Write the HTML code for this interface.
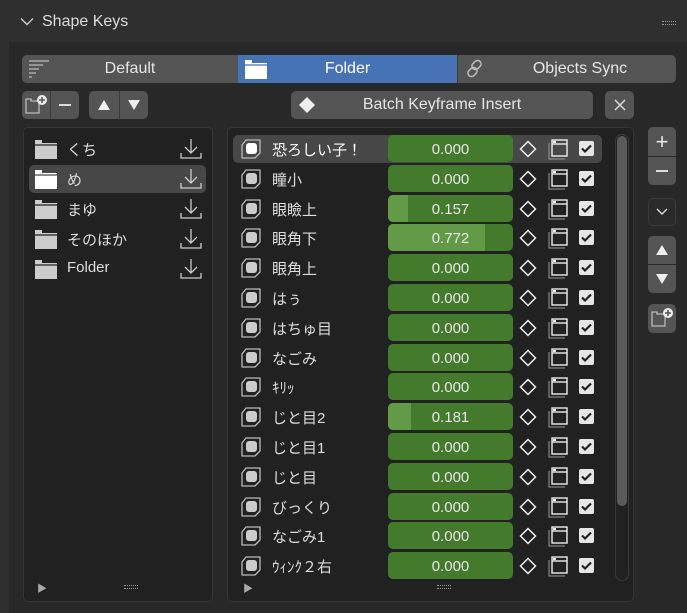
<!DOCTYPE html>
<html><head><meta charset="utf-8"><style>
*{box-sizing:border-box;margin:0;padding:0}
body{width:687px;height:613px;background:#2f2f2f;font-family:"Liberation Sans","Noto Sans CJK JP",sans-serif;color:#e0e0e0;font-size:15px;position:relative;overflow:hidden}
.a{position:absolute}
.btn{position:absolute;background:#545454;border-radius:5px;display:flex;align-items:center;justify-content:center;color:#e6e6e6;font-size:16px}
.row{position:absolute;left:233px;width:369px;height:28px}
.sl{position:absolute;left:155px;width:125px;height:27px;top:0;background:#447a2c;border-radius:5px;overflow:hidden;text-align:center;line-height:29px;color:#e8e8e8;font-size:15px}
.sl i{position:absolute;left:0;top:0;bottom:0;background:#629a48}
.sl span{position:relative}
.nm{position:absolute;left:39px;top:4px;font-size:15px;color:#ddd}
.ck{position:absolute;left:346px;top:6px;width:15px;height:15px;background:#e6e6e6;border-radius:2px}
</style></head><body>
<div class="a" style="left:9px;top:42px;width:678px;height:571px;background:#282828"></div>
<svg class="a" style="left:20px;top:17px" width="14" height="10"><path d="M1 1.5 L7 7.5 L13 1.5" stroke="#ccc" stroke-width="1.4" fill="none"/></svg>
<div class="a" style="left:42px;top:13px;font-size:16px;color:#ddd">Shape Keys</div>
<div class="a" style="left:662px;top:21px;width:14px;height:4px;border-top:1px dotted #999;border-bottom:1px dotted #999"></div>

<div class="btn" style="left:22px;top:55px;width:216px;height:28px;border-radius:5px 0 0 5px">Default</div>
<svg class="a" style="left:28px;top:58px" width="22" height="22"><g stroke="#bbb" stroke-width="1.3"><path d="M1 3h20M1 7h14M1 11h10M1 15h7M1 19h3"/></g></svg>
<div class="btn" style="left:238px;top:55px;width:219px;height:28px;border-radius:0;background:#4772b3;color:#fff">Folder</div>
<svg class="a" style="left:245px;top:60px" width="22" height="19"><path d="M0 0h7v3h15v16H0z" fill="#fff"/><path d="M0 5h22" stroke="#4772b3" stroke-width="1.3"/></svg>
<div class="btn" style="left:457px;top:55px;width:219px;height:28px;border-radius:0 5px 5px 0;border-left:1px solid #3a3a3a;padding-left:26px">Objects Sync</div>
<svg class="a" style="left:464px;top:58px" width="22" height="22"><g stroke="#bbb" stroke-width="1.5" fill="none"><rect x="9" y="2" width="7" height="10" rx="3.5" transform="rotate(45 12.5 7)"/><rect x="5" y="9" width="7" height="10" rx="3.5" transform="rotate(45 8.5 14)"/></g></svg>

<div class="btn" style="left:22px;top:91px;width:28px;height:28px;border-radius:5px 0 0 5px"></div>
<svg class="a" style="left:24px;top:93px" width="24" height="24"><path d="M2 6h5v2h8v12H2z" fill="none" stroke="#bbb" stroke-width="1.3"/><circle cx="18" cy="7" r="5" fill="#eee"/><path d="M18 4v6M15 7h6" stroke="#545454" stroke-width="1.6"/></svg>
<div class="btn" style="left:50px;top:91px;width:29px;height:28px;border-radius:0 5px 5px 0;border-left:1px solid #3a3a3a"><div style="width:12px;height:2px;background:#ddd"></div></div>
<div class="btn" style="left:89px;top:91px;width:30px;height:28px;border-radius:5px 0 0 5px"><svg width="14" height="12"><path d="M7 1L13 11H1z" fill="#eee"/></svg></div>
<div class="btn" style="left:119px;top:91px;width:29px;height:28px;border-radius:0 5px 5px 0;border-left:1px solid #3a3a3a"><svg width="14" height="12"><path d="M7 11L13 1H1z" fill="#eee"/></svg></div>
<div class="btn" style="left:291px;top:91px;width:302px;height:28px">Batch Keyframe Insert</div>
<svg class="a" style="left:298px;top:96px" width="18" height="18"><path d="M9 1L17 9L9 17L1 9z" fill="#eee"/></svg>
<div class="btn" style="left:605px;top:91px;width:29px;height:28px"><svg width="14" height="14"><path d="M2 2L12 12M12 2L2 12" stroke="#ddd" stroke-width="1.5"/></svg></div>

<div class="a" style="left:23px;top:127px;width:190px;height:475px;background:#212121;border:1px solid #353535;border-radius:5px"></div>
<div class="a" style="left:29px;top:165px;width:177px;height:28px;background:#474747;border-radius:5px"></div>
<div class="a" style="left:37px;top:580px;font-size:10px;color:#aaa">▶</div>
<div class="a" style="left:124px;top:585px;width:14px;height:4px;border-top:1px dotted #999;border-bottom:1px dotted #999"></div>
<div class="a" style="left:227px;top:127px;width:407px;height:475px;background:#212121;border:1px solid #353535;border-radius:5px"></div>
<div class="a" style="left:243px;top:580px;font-size:10px;color:#aaa">▶</div>
<div class="a" style="left:437px;top:585px;width:14px;height:4px;border-top:1px dotted #999;border-bottom:1px dotted #999"></div>
<div class="a" style="left:615px;top:134px;width:14px;height:447px;border:1px solid #3a3a3a;border-radius:7px"></div>
<div class="a" style="left:617px;top:136px;width:10px;height:370px;background:#5a5a5a;border-radius:5px"></div>

<div class="btn" style="left:648px;top:127px;width:28px;height:29px;border-radius:5px 5px 0 0;font-size:22px">+</div>
<div class="btn" style="left:648px;top:157px;width:28px;height:28px;border-radius:0 0 5px 5px"><div style="width:12px;height:2px;background:#ddd"></div></div>
<div class="btn" style="left:648px;top:198px;width:28px;height:28px;background:#2a2a2a;border:1px solid #3a3a3a"><svg width="14" height="10"><path d="M2 2L7 7L12 2" stroke="#ddd" stroke-width="1.4" fill="none"/></svg></div>
<div class="btn" style="left:648px;top:236px;width:28px;height:28px;border-radius:5px 5px 0 0"><svg width="14" height="12"><path d="M7 1L13 11H1z" fill="#eee"/></svg></div>
<div class="btn" style="left:648px;top:265px;width:28px;height:28px;border-radius:0 0 5px 5px"><svg width="14" height="12"><path d="M7 11L13 1H1z" fill="#eee"/></svg></div>
<div class="btn" style="left:648px;top:304px;width:28px;height:29px"></div>
<svg class="a" style="left:650px;top:306px" width="24" height="24"><path d="M2 6h5v2h8v12H2z" fill="none" stroke="#bbb" stroke-width="1.3"/><circle cx="18" cy="7" r="5" fill="#eee"/><path d="M18 4v6M15 7h6" stroke="#545454" stroke-width="1.6"/></svg>

<div id="L"></div><div id="R"></div>
<script>
var L=["くち","め","まゆ","そのほか","Folder"],h="";
L.forEach(function(t,i){var y=[149,179,209,239,269][i];
h+='<svg class="a" style="left:35px;top:'+(y-9)+'px" width="22" height="19"><path d="M0 0h7v3h15v16H0z" fill="'+(i==1?'#fff':'#ccc')+'"/><path d="M0 5h22" stroke="'+(i==1?'#474747':'#212121')+'" stroke-width="1.3"/></svg>';
h+='<div class="a" style="left:67px;top:'+(y-10)+'px;color:#ddd">'+t+'</div>';
h+='<svg class="a" style="left:180px;top:'+(y-11)+'px" width="22" height="22"><g stroke="#ccc" stroke-width="1.3" fill="none"><path d="M11 1v14M5 9l6 6 6-6M1 15v5h20v-5"/></g></svg>';});
document.getElementById("L").innerHTML=h;
var R=[["恐ろしい子！",0],["瞳小",0],["眼瞼上",.157],["眼角下",.772],["眼角上",0],["はぅ",0],["はちゅ目",0],["なごみ",0],["ｷﾘｯ",0],["じと目2",.181],["じと目1",0],["じと目",0],["びっくり",0],["なごみ1",0],["ｳｨﾝｸ２右",0]];
h="";R.forEach(function(r,i){var y=135+i*29.8;
h+='<div class="row" style="top:'+y+'px;'+(i==0?'background:#474747;border-radius:5px':'')+'">';
h+='<svg class="a" style="left:6px;top:3px" width="24" height="22"><path d="M7 2h14v13l-5 5H3V7z" fill="none" stroke="#bbb" stroke-width="1.3" stroke-linejoin="round"/><rect x="7" y="5" width="11" height="11" rx="3" fill="'+(i==0?'#fff':'#ccc')+'"/></svg>';
h+='<div class="nm"'+(i==0?' style="color:#fff"':'')+'>'+r[0]+'</div>';
h+='<div class="sl"><i style="width:'+(r[1]*125)+'px"></i><span>'+r[1].toFixed(3)+'</span></div>';
h+='<svg class="a" style="left:286px;top:5px" width="18" height="18"><path d="M9 1.5L16.5 9L9 16.5L1.5 9z" fill="none" stroke="#eee" stroke-width="1.5"/></svg>';
h+='<svg class="a" style="left:314px;top:3px" width="22" height="22"><path d="M2 5v16h16" fill="none" stroke="#999" stroke-width="1"/><rect x="5" y="2" width="15" height="16" fill="none" stroke="#eee" stroke-width="1.4"/><path d="M5 6h15" stroke="#eee" stroke-width="1.4"/><rect x="6" y="3" width="3" height="2" fill="#eee"/></svg>';
h+='<div class="ck"><svg width="15" height="15"><path d="M3 7.5l3 3 6-6" stroke="#222" stroke-width="2.2" fill="none"/></svg></div></div>';});
document.getElementById("R").innerHTML=h;
</script>
</body></html>
